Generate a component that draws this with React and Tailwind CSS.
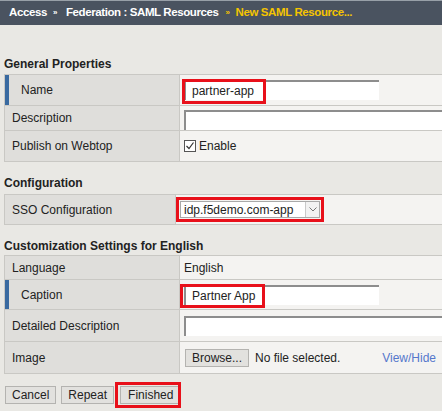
import React from 'react'

const Row = ({ label, accent, h, labelW = 175, children }) => (
  <div className={`flex border-b border-[#c9c8c4] ${h}`}>
    <div
      className={`flex shrink-0 items-center border-r border-[#c9c8c4] bg-[#dfdedb] ${accent ? 'border-l-[4px] border-l-[#3a6aa0] pl-[12px]' : 'pl-[7px]'}`}
      style={{ width: labelW }}
    >
      {label}
    </div>
    <div className="flex flex-1 items-center bg-[#f4f3f1]">{children}</div>
  </div>
)

const TextInput = ({ value, w = 'w-[195px]' }) => (
  <div className={`h-[20px] ${w} border-t-2 border-l-2 border-[#8d8d8d] bg-white pl-[6px] text-[12px] leading-[18px]`}>
    {value}
  </div>
)

const Btn = ({ children, className = '' }) => (
  <div className={`h-[18px] border border-[#b4b3b0] bg-[#e2e1de] px-[6px] text-[12px] leading-[16px] ${className}`}>{children}</div>
)

export default function App() {
  return (
    <div className="h-[411px] w-[442px] overflow-hidden bg-[#e9e8e4] font-['Liberation_Sans',Arial,sans-serif] text-[12px] text-[#222]">
      <div className="flex h-[25px] items-center border-t border-[#98a0a8] bg-[#4a5360] pl-[9px] text-[11.5px] font-bold tracking-[-0.4px] text-white">
        <span>Access</span>
        <span className="ml-[6px] mr-[9px] text-[8px]">»</span>
        <span>Federation : SAML Resources</span>
        <span className="ml-[7px] mr-[6px] text-[8px] text-[#f5c400]">»</span>
        <span className="text-[#f5c400]">New SAML Resource...</span>
      </div>

      <div className="mt-[32px] pl-[4px] font-bold leading-[14px]">General Properties</div>
      <div className="ml-[4px] mt-[3px] w-[460px] border-t border-l border-[#c9c8c4]">
        <Row label="Name" accent h="h-[31px]">
          <div className="relative ml-[4px]">
            <TextInput value="partner-app" />
            <div className="absolute left-[-2px] top-[-1px] h-[25px] w-[84px] border-[3px] border-[#e8101a]" />
          </div>
        </Row>
        <Row label="Description" h="h-[25px]">
          <div className="ml-[4px] mt-[4px] self-stretch">
            <TextInput value="" w="w-[280px]" />
          </div>
        </Row>
        <Row label="Publish on Webtop" h="h-[31px]">
          <div className="ml-[4px] flex items-center gap-[3px]">
            <div className="flex h-[12px] w-[12px] items-center justify-center border border-[#555] bg-white">
              <svg width="10" height="10" viewBox="0 0 10 10">
                <path d="M1.5 5 L4 7.5 L8.5 1.5" fill="none" stroke="#333" strokeWidth="1.2" />
              </svg>
            </div>
            <span>Enable</span>
          </div>
        </Row>
      </div>

      <div className="mt-[14px] pl-[4px] font-bold leading-[14px]">Configuration</div>
      <div className="ml-[4px] mt-[4px] w-[460px] border-t border-l border-[#c9c8c4]">
        <Row label="SSO Configuration" h="h-[30px]" labelW={171}>
          <div className="h-[25px] w-[148px] border-[3px] border-[#e8101a] p-[1px]">
            <div className="flex h-full items-center border border-[#a9a9a9] bg-white pl-[3px]">
              <span className="flex-1">idp.f5demo.com-app</span>
              <div className="flex h-full w-[14px] items-center justify-center border-l border-[#c9c9c9] bg-[#f2f2f2]">
                <svg width="8" height="5" viewBox="0 0 8 5">
                  <path d="M0.5 0.5 L4 4 L7.5 0.5" fill="none" stroke="#777" strokeWidth="1" />
                </svg>
              </div>
            </div>
          </div>
        </Row>
      </div>

      <div className="mt-[14px] pl-[4px] font-bold leading-[14px]">Customization Settings for English</div>
      <div className="ml-[4px] mt-[2px] w-[460px] border-t border-l border-[#c9c8c4]">
        <Row label="Language" h="h-[24px]">
          <span className="ml-[4px]">English</span>
        </Row>
        <Row label="Caption" accent h="h-[30px]">
          <div className="relative ml-[4px]">
            <TextInput value="Partner App" />
            <div className="absolute left-[-4px] top-[-1px] h-[24px] w-[85px] border-[3px] border-[#e8101a]" />
          </div>
        </Row>
        <Row label="Detailed Description" h="h-[32px]">
          <div className="ml-[4px] mt-[6px] self-stretch">
            <TextInput value="" w="w-[280px]" />
          </div>
        </Row>
        <Row label="Image" h="h-[32px]">
          <div className="ml-[5px] flex w-[251px] items-center">
            <Btn className="w-[64px] !px-0 text-center">Browse...</Btn>
            <span className="ml-[6px]">No file selected.</span>
            <span className="ml-auto text-[#5577cc]">View/Hide</span>
          </div>
        </Row>
      </div>

      <div className="ml-[5px] mt-[12px] flex items-center gap-[5px]">
        <Btn>Cancel</Btn>
        <Btn>Repeat</Btn>
        <div className="relative ml-[1px]">
          <Btn className="px-[7px]">Finished</Btn>
          <div className="absolute left-[-5px] top-[-4px] h-[26px] w-[66px] border-[3px] border-[#e8101a]" />
        </div>
      </div>
    </div>
  )
}
